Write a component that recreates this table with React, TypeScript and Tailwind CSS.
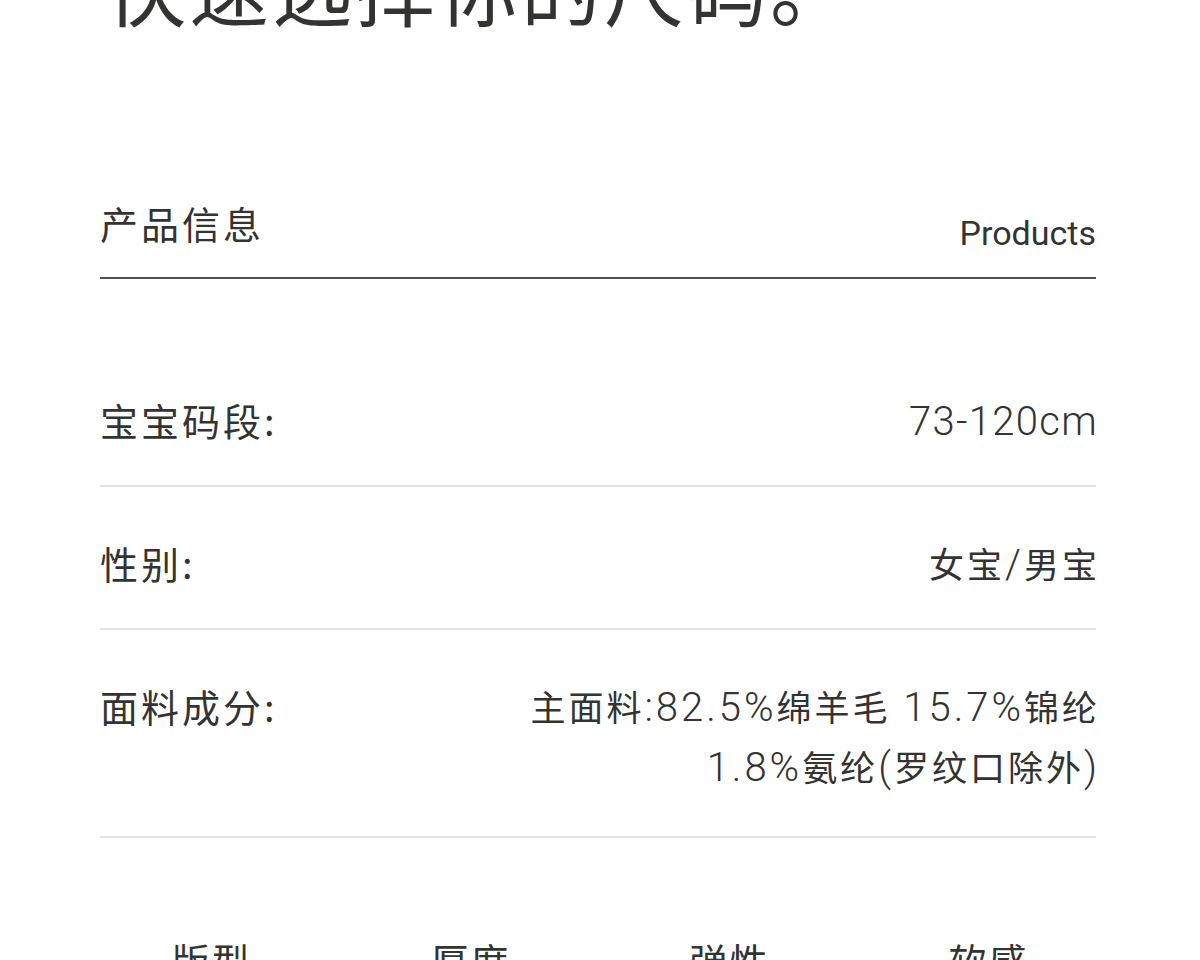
const cjk = "font-['Noto_Sans_CJK_SC','Noto_Sans',sans-serif]";

const rows = [
  { label: "宝宝码段:", value: ["73-120cm"], tight: true },
  { label: "性别:", value: ["女宝/男宝"], tight: false },
  { label: "面料成分:", value: ["主面料:82.5%绵羊毛 15.7%锦纶", "1.8%氨纶(罗纹口除外)"], tight: false },
];

const features = ["版型", "厚度", "弹性", "软感"];

// split a line into hanzi runs and latin runs, latin is set a bit larger
const splitRuns = (text: string) => text.match(/[\u4e00-\u9fff]+|[^\u4e00-\u9fff]+/g) || [];

const ValueLine = ({ text, tight }: { text: string; tight: boolean }) => (
  <div>
    {splitRuns(text).map((run, i) =>
      /[\u4e00-\u9fff]/.test(run) ? (
        <span key={i}>{run}</span>
      ) : (
        <span
          key={i}
          className={`font-['Roboto',sans-serif] text-[40px] leading-none font-light whitespace-pre ${tight ? "tracking-[1.3px]" : ""}`}
        >
          {run}
        </span>
      )
    )}
  </div>
);

export default function App() {
  return (
    <div className={`h-[960px] w-[1200px] overflow-hidden bg-white text-[#333331] ${cjk}`}>
      {/* big title, cut off by the top edge */}
      <h1 className="-mt-[55px] pl-[106px] text-[80px] leading-none tracking-[3px] font-normal">
        快速选择你的尺码。
      </h1>

      <div className="ml-[100px] w-[996px]">
        {/* section header */}
        <div className="mt-[174px] flex items-end justify-between border-b-2 border-[#505050] pb-[30px]">
          <span className="text-[38px] leading-[48px] tracking-[3px]">产品信息</span>
          <span className="-mb-[6px] font-['Roboto',sans-serif] text-[34px] leading-[40px]">Products</span>
        </div>

        {/* product rows */}
        <div className="mt-[93px]">
          {rows.map((row, i) => (
            <div
              key={row.label}
              className={`flex items-start justify-between border-b-2 border-[#e2e2e2] ${i === 0 ? "pt-[18px]" : "pt-[46px]"} ${i === 2 ? "pb-[40px]" : "pb-[35px]"}`}
            >
              <span className="text-[38px] leading-[60px] tracking-[3px]">{row.label}</span>
              <div className={`${row.tight ? "-mr-[2px]" : "-mr-[4px]"} text-right text-[35px] leading-[60px] tracking-[3px]`}>
                {row.value.map((v) => (
                  <ValueLine key={v} text={v} tight={row.tight} />
                ))}
              </div>
            </div>
          ))}
        </div>
      </div>

      {/* feature tabs */}
      <div className="mt-[98px] grid grid-cols-4 px-[82px]">
        {features.map((f) => (
          <div key={f} className="text-center text-[38px] leading-[48px] tracking-[2px]">
            {f}
          </div>
        ))}
      </div>
    </div>
  );
}
